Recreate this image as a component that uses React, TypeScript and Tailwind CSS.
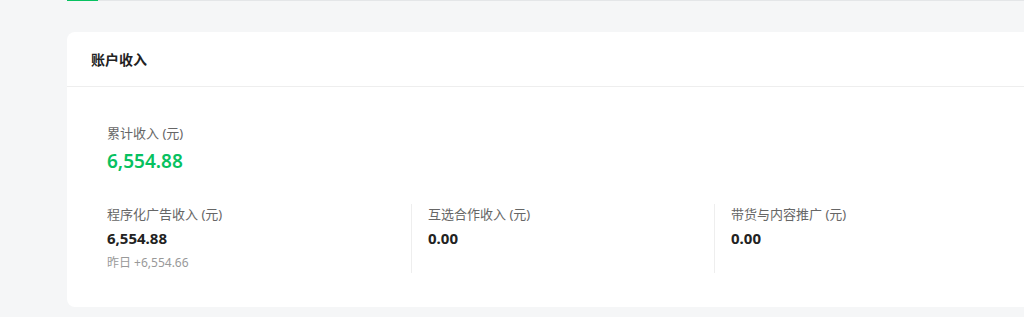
export default function App() {
  const font = { fontFamily: '"Noto Sans", "Noto Sans CJK SC", sans-serif' }
  return (
    <div className="h-[317px] w-[1024px] overflow-hidden bg-[#f5f6f7]" style={font}>
      {/* tab bar bottom edge */}
      <div className="ml-[67px] flex h-px">
        <div className="w-[31px] bg-[#07c160]" />
        <div className="flex-1 bg-[#e4e6e8]" />
      </div>

      <div className="ml-[67px] mt-[31px] w-[1100px] rounded-lg bg-white">
        {/* header */}
        <div className="flex h-[55px] items-center border-b border-[#eeeeee] px-6">
          <span className="text-[14px] font-bold text-[#222]">账户收入</span>
        </div>

        {/* body */}
        <div className="px-10 pt-[36px] pb-[34px]">
          <div className="text-[13px] leading-5 text-[#666]">累计收入 (元)</div>
          <div className="mt-[4px] text-[19px] font-semibold leading-7 text-[#07c160]">6,554.88</div>

          <div className="mt-[29px] flex">
            <div className="w-[304px]">
              <div className="text-[13px] leading-5 text-[#666]">程序化广告收入 (元)</div>
              <div className="mt-[4px] text-[15px] font-bold leading-5 text-[#222]">6,554.88</div>
              <div className="mt-[5px] text-[12px] leading-5 text-[#999]">昨日 +6,554.66</div>
            </div>
            <div className="w-[303px] border-l border-[#eeeeee] pl-4">
              <div className="text-[13px] leading-5 text-[#666]">互选合作收入 (元)</div>
              <div className="mt-[4px] text-[15px] font-bold leading-5 text-[#222]">0.00</div>
            </div>
            <div className="w-[303px] border-l border-[#eeeeee] pl-4">
              <div className="text-[13px] leading-5 text-[#666]">带货与内容推广 (元)</div>
              <div className="mt-[4px] text-[15px] font-bold leading-5 text-[#222]">0.00</div>
            </div>
          </div>
        </div>
      </div>
    </div>
  )
}
